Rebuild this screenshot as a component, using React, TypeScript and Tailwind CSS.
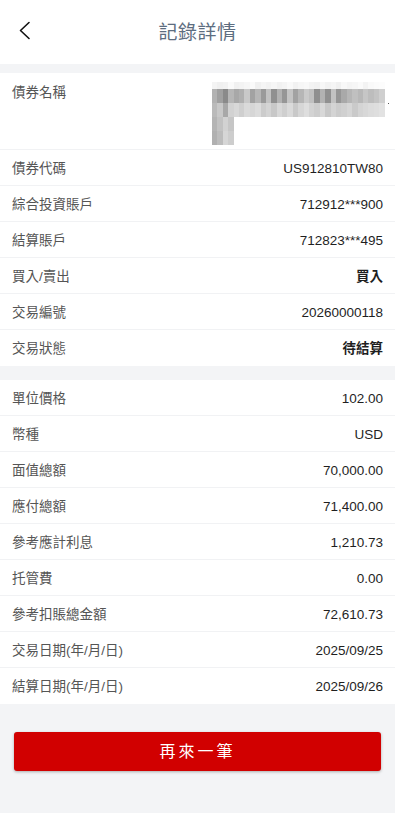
import React from "react";

type Row = { label: string; value: string; bold?: boolean };

const tradeRows: Row[] = [
  { label: "債券代碼", value: "US912810TW80" },
  { label: "綜合投資賬戶", value: "712912***900" },
  { label: "結算賬戶", value: "712823***495" },
  { label: "買入/賣出", value: "買入", bold: true },
  { label: "交易編號", value: "20260000118" },
  { label: "交易狀態", value: "待結算", bold: true },
];

const amountRows: Row[] = [
  { label: "單位價格", value: "102.00" },
  { label: "幣種", value: "USD" },
  { label: "面值總額", value: "70,000.00" },
  { label: "應付總額", value: "71,400.00" },
  { label: "參考應計利息", value: "1,210.73" },
  { label: "托管費", value: "0.00" },
  { label: "參考扣賬總金額", value: "72,610.73" },
  { label: "交易日期(年/月/日)", value: "2025/09/25" },
  { label: "結算日期(年/月/日)", value: "2025/09/26" },
];

// masked bond name, drawn as blurred pixel blocks
const topRow = [
  "bg-[#f4f4f4]", "bg-[#f0f0f0]", "bg-[#f2f2f2]", "bg-[#fafafa]", "bg-[#f1f1f1]", "bg-[#f3f3f3]",
  "bg-[#f6f6f6]", "bg-[#fafafa]", "bg-[#f0f0f0]", "bg-[#f5f5f5]", "bg-[#f2f2f2]", "bg-[#f6f6f6]",
  "bg-[#f1f1f1]", "bg-[#f4f4f4]", "bg-[#f9f9f9]", "bg-[#f2f2f2]", "bg-[#f6f6f6]", "bg-[#f8f8f8]",
  "bg-[#f3f3f3]", "bg-[#f1f1f1]", "bg-[#f7f7f7]", "bg-[#f2f2f2]", "bg-[#f5f5f5]", "bg-[#f0f0f0]",
  "bg-[#f8f8f8]", "bg-[#f4f4f4]", "bg-[#f6f6f6]", "bg-[#fafafa]", "bg-[#f3f3f3]", "bg-[#f9f9f9]",
  "bg-[#fbfbfb]", "bg-[#fcfcfc]",
];
const midRow = [
  "bg-[#b2b2b2]", "bg-[#a0a0a0]", "bg-[#8a8a8a]", "bg-[#b6b6b6]", "bg-[#a8a8a8]", "bg-[#b0b0b0]",
  "bg-[#c9c9c9]", "bg-[#a2a2a2]", "bg-[#b6b6b6]", "bg-[#9a9a9a]", "bg-[#c2c2c2]", "bg-[#909090]",
  "bg-[#b2b2b2]", "bg-[#969696]", "bg-[#c4c4c4]", "bg-[#a2a2a2]", "bg-[#b6b6b6]", "bg-[#cacaca]",
  "bg-[#c0c0c0]", "bg-[#8f8f8f]", "bg-[#b2b2b2]", "bg-[#909090]", "bg-[#c2c2c2]", "bg-[#969696]",
  "bg-[#a9a9a9]", "bg-[#b6b6b6]", "bg-[#c0c0c0]", "bg-[#b8b8b8]", "bg-[#c6c6c6]", "bg-[#bdbdbd]",
  "bg-[#c4c4c4]", "bg-[#cfcfcf]",
];
const lowRow = [
  "bg-[#bababa]", "bg-[#c8c8c8]", "bg-[#a8a8a8]", "bg-[#d2d2d2]", "bg-[#d8d8d8]", "bg-[#cfcfcf]",
  "bg-[#dadada]", "bg-[#d6d6d6]", "bg-[#dcdcdc]", "bg-[#cccccc]", "bg-[#d4d4d4]", "bg-[#c8c8c8]",
  "bg-[#d8d8d8]", "bg-[#cfcfcf]", "bg-[#dadada]", "bg-[#c9c9c9]", "bg-[#d6d6d6]", "bg-[#dedede]",
  "bg-[#d3d3d3]", "bg-[#cdcdcd]", "bg-[#d8d8d8]", "bg-[#c8c8c8]", "bg-[#d4d4d4]", "bg-[#cccccc]",
  "bg-[#d0d0d0]", "bg-[#d6d6d6]", "bg-[#cacaca]", "bg-[#d4d4d4]", "bg-[#d8d8d8]", "bg-[#dcdcdc]",
  "bg-[#dedede]", "bg-[#e2e2e2]",
];
const tailRows = [
  ["bg-[#b4b4b4]", "bg-[#c2c2c2]", "bg-[#d2d2d2]", "bg-[#c6c6c6]"],
  ["bg-[#b0b0b0]", "bg-[#bcbcbc]", "bg-[#d6d6d6]", "bg-[#cdcdcd]"],
];

function MaskedName() {
  return (
    <div className="flex items-end gap-[3px]">
      <div className="flex flex-col">
        <div className="flex h-[7px]">
          {topRow.map((c, i) => (
            <div key={i} className={`w-[5.4px] ${c}`} />
          ))}
        </div>
        <div className="flex h-[14px]">
          {midRow.map((c, i) => (
            <div key={i} className={`w-[5.4px] ${c}`} />
          ))}
        </div>
        <div className="flex h-[14px]">
          {lowRow.map((c, i) => (
            <div key={i} className={`w-[5.4px] ${c}`} />
          ))}
        </div>
        {tailRows.map((row, r) => (
          <div key={r} className="flex h-[14px]">
            {row.map((c, i) => (
              <div key={i} className={`w-[5.4px] ${c}`} />
            ))}
          </div>
        ))}
      </div>
      <div className="mb-[41px] h-[1.5px] w-[1.5px] bg-[#555]" />
    </div>
  );
}

function DetailRow({ row }: { row: Row }) {
  return (
    <div className="flex h-[36px] items-center justify-between border-b border-[#f1f2f4] px-3 pt-[3px] last:border-b-0">
      <span className="text-[13.5px] text-[#555]">{row.label}</span>
      <span className={`text-[13.5px] text-[#1f1f1f] ${row.bold ? "font-bold" : ""}`}>{row.value}</span>
    </div>
  );
}

export default function App() {
  return (
    <div
      className="flex min-h-[813px] flex-col bg-[#f3f4f6]"
      style={{ fontFamily: '"Liberation Sans", "Noto Sans CJK TC", sans-serif' }}
    >
      <header className="relative flex h-[64px] items-center justify-center bg-white pt-[2px]">
        <button className="absolute left-[15px] top-[17px] p-1">
          <svg width="12" height="20" viewBox="0 0 12 20" fill="none">
            <polyline points="10,1.5 1.5,9.5 10,17.5" stroke="#111" strokeWidth="1.6" strokeLinecap="round" strokeLinejoin="round" />
          </svg>
        </button>
        <h1 className="text-[19px] font-normal tracking-[0.5px] text-[#5d6d80]">記錄詳情</h1>
      </header>

      <section className="mt-[9px] bg-white">
        <div className="flex h-[77px] justify-between border-b border-[#f1f2f4] pl-3 pr-[6px] pt-[10px]">
          <span className="text-[13.5px] text-[#555]">債券名稱</span>
          <div className="-mt-[1px]">
            <MaskedName />
          </div>
        </div>
        {tradeRows.map(row => (
          <DetailRow key={row.label} row={row} />
        ))}
      </section>

      <section className="mt-[14px] bg-white">
        {amountRows.map(row => (
          <DetailRow key={row.label} row={row} />
        ))}
      </section>

      <div className="px-[14px] pt-[28px]">
        <button className="h-[39px] w-full rounded-[3px] bg-[#d10000] text-[16px] tracking-[3px] text-white shadow-[0_1px_3px_rgba(0,0,0,0.3)]">
          再來一筆
        </button>
      </div>
    </div>
  );
}
